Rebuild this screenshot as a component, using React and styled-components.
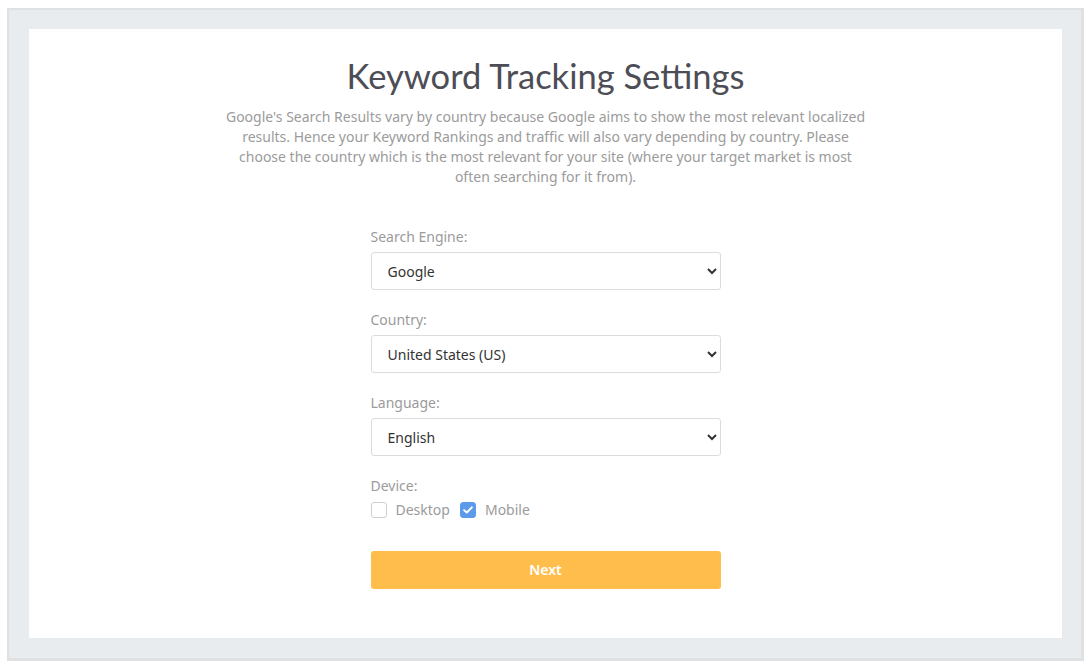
import React, { useState } from "react";
import styled, { createGlobalStyle } from "styled-components";

const Global = createGlobalStyle`
  html, body { margin: 0; padding: 0; background: #ffffff; }
  body { font-family: "Noto Sans", "Open Sans", sans-serif; }
  * { box-sizing: border-box; }
`;

const Page = styled.div`
  padding: 8px 6px 7px 7px;
`;

const Frame = styled.div`
  background: #e9ecef;
  border: 2px solid #dfe1e3;
  border-right-width: 3px;
  border-bottom-width: 3px;
  padding: 19px 19px 20px 20px;
`;

const Card = styled.div`
  background: #ffffff;
  height: 609px;
  display: flex;
  flex-direction: column;
  align-items: center;
  padding-top: 26px;
`;

const Title = styled.h1`
  margin: 0;
  font-family: "Lato", "Noto Sans", sans-serif;
  font-weight: 400;
  font-size: 34.5px;
  line-height: 42px;
  color: #4d4d56;
`;

const Lead = styled.p`
  margin: 10px 0 0;
  max-width: 650px;
  text-align: center;
  font-size: 14px;
  line-height: 20px;
  color: #9b9b9b;
`;

const Form = styled.form`
  width: 350px;
  margin-top: 40px;
  display: flex;
  flex-direction: column;
`;

const Field = styled.div`
  display: flex;
  flex-direction: column;
  margin-bottom: 20px;
`;

const Label = styled.label`
  font-size: 14px;
  line-height: 20px;
  color: #9b9b9b;
  margin-bottom: 5px;
`;

const Select = styled.select`
  height: 38px;
  width: 100%;
  border: 1px solid #dcdcdc;
  border-radius: 3px;
  background: #ffffff;
  padding: 0 8px 0 12px;
  font-family: "Noto Sans", sans-serif;
  font-size: 14px;
  color: #333333;
  outline: none;
`;

const Checks = styled.div`
  display: flex;
  align-items: center;
  gap: 10px;
  margin-top: -1px;
`;

const CheckLabel = styled.label`
  display: flex;
  align-items: center;
  gap: 9px;
  font-size: 14px;
  line-height: 20px;
  color: #9b9b9b;
  cursor: pointer;
`;

const Box = styled.span`
  width: 16px;
  height: 16px;
  border-radius: 3px;
  border: 1px solid ${(p) => (p.$checked ? "#5b9bea" : "#cfcfcf")};
  background: ${(p) => (p.$checked ? "#5b9bea" : "#ffffff")};
  display: flex;
  align-items: center;
  justify-content: center;
`;

const Button = styled.button`
  margin-top: 11px;
  height: 38px;
  width: 100%;
  border: none;
  border-radius: 3px;
  background: #ffbe4b;
  color: #ffffff;
  font-family: "Noto Sans", sans-serif;
  font-weight: 600;
  font-size: 14px;
  padding: 0 0 2px;
  cursor: pointer;
`;

function Check({ label, checked, onToggle }) {
  return (
    <CheckLabel onClick={onToggle}>
      <Box $checked={checked}>
        {checked && (
          <svg width="10" height="8" viewBox="0 0 10 8">
            <path d="M1.2 4.2 L3.8 6.6 L8.8 1.4" fill="none" stroke="#fff" strokeWidth="2" strokeLinecap="round" strokeLinejoin="round" />
          </svg>
        )}
      </Box>
      {label}
    </CheckLabel>
  );
}

export default function App() {
  const [desktop, setDesktop] = useState(false);
  const [mobile, setMobile] = useState(true);
  return (
    <>
      <Global />
      <Page>
        <Frame>
          <Card>
            <Title>Keyword Tracking Settings</Title>
            <Lead>
              Google's Search Results vary by country because Google aims to show the most relevant localized
              results. Hence your Keyword Rankings and traffic will also vary depending by country. Please
              choose the country which is the most relevant for your site (where your target market is most
              often searching for it from).
            </Lead>
            <Form onSubmit={(e) => e.preventDefault()}>
              <Field>
                <Label>Search Engine:</Label>
                <Select defaultValue="Google">
                  <option>Google</option>
                  <option>Bing</option>
                </Select>
              </Field>
              <Field>
                <Label>Country:</Label>
                <Select defaultValue="United States (US)">
                  <option>United States (US)</option>
                  <option>United Kingdom (UK)</option>
                </Select>
              </Field>
              <Field>
                <Label>Language:</Label>
                <Select defaultValue="English">
                  <option>English</option>
                  <option>Spanish</option>
                </Select>
              </Field>
              <Field>
                <Label>Device:</Label>
                <Checks>
                  <Check label="Desktop" checked={desktop} onToggle={() => setDesktop(!desktop)} />
                  <Check label="Mobile" checked={mobile} onToggle={() => setMobile(!mobile)} />
                </Checks>
              </Field>
              <Button type="submit">Next</Button>
            </Form>
          </Card>
        </Frame>
      </Page>
    </>
  );
}
